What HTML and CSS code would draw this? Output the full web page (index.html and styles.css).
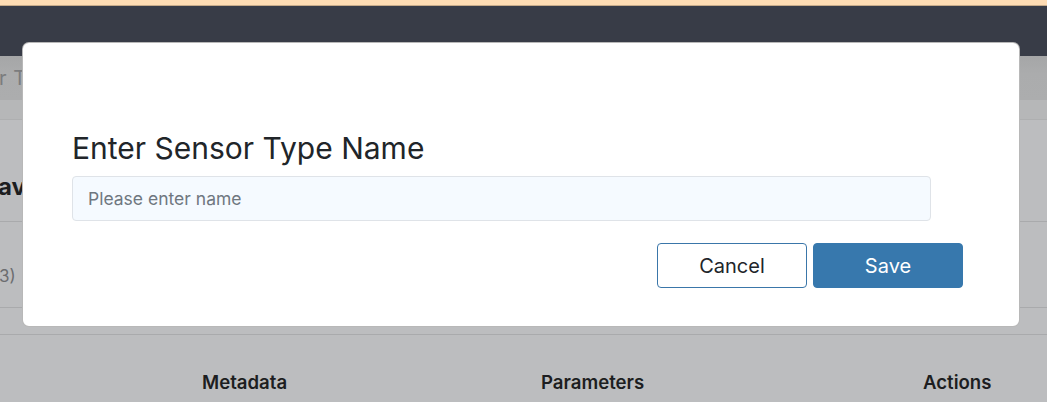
FILE: index.html
```html
<!DOCTYPE html>
<html lang="en">
<head>
<meta charset="utf-8">
<title>Enter Sensor Type Name</title>
<link rel="stylesheet" href="styles.css">
</head>
<body>
<div class="page">
  <div class="topbar"></div>
  <div class="navbar"></div>
  <div class="subbar"><span class="crumb">r Types</span></div>
  <div class="band"></div>
  <div class="row row-title"><span class="page-title">avi</span></div>
  <div class="row row-count"><span class="count">3)</span></div>
  <div class="row row-empty"></div>
  <div class="table-head">
    <span></span>
    <span>Metadata</span>
    <span>Parameters</span>
    <span>Actions</span>
  </div>
</div>

<div class="modal">
  <h2 class="modal-title">Enter Sensor Type Name</h2>
  <input class="modal-input" type="text" placeholder="Please enter name">
  <div class="modal-footer">
    <button class="btn btn-outline">Cancel</button>
    <button class="btn btn-primary">Save</button>
  </div>
</div>
</body>
</html>
```
FILE: styles.css
```css
html, body {
  margin: 0;
  padding: 0;
}
body {
  width: 1047px;
  height: 402px;
  overflow: hidden;
  background: #bcbdbf;
  font-family: Inter, "Noto Sans", sans-serif;
  position: relative;
}
.page {
  display: flex;
  flex-direction: column;
}
.topbar {
  height: 5px;
  background: #fedcb4;
  border-bottom: 1px solid #c7ab8a;
}
.navbar {
  height: 50px;
  background: #383c47;
}
.subbar {
  height: 44px;
  background: linear-gradient(#a5a6a7, #abacad 40%, #acadae);
  display: flex;
  align-items: center;
}
.crumb {
  font-size: 20px;
  color: #7b7c7e;
  margin-left: -1px;
  letter-spacing: 0.5px;
}
.band {
  height: 19px;
  background: #b6b7b8;
  border-bottom: 1px solid #aeafb0;
}
.row {
  display: flex;
  align-items: center;
  border-bottom: 1px solid #a9aaac;
}
.row-title {
  height: 101px;
}
.page-title {
  font-size: 24px;
  font-weight: 700;
  color: #1c1d1f;
  margin-left: -2px;
  margin-top: 32px;
}
.row-count {
  height: 85px;
}
.count {
  font-size: 17px;
  color: #6c6d70;
  margin-left: -1px;
  margin-top: 22px;
}
.row-empty {
  height: 26px;
}
.table-head {
  display: grid;
  grid-template-columns: 202px 339px 382px 1fr;
  height: 66px;
  align-items: end;
  font-size: 18.6px;
  font-weight: 600;
  color: #1d1e21;
}
.table-head span {
  line-height: 22px;
  margin-bottom: 8px;
}

.modal {
  position: absolute;
  left: 22px;
  top: 42px;
  width: 996px;
  height: 283px;
  background: #ffffff;
  border: 1px solid rgba(0, 0, 0, 0.28);
  border-radius: 7px;
  box-sizing: content-box;
  display: flex;
  flex-direction: column;
  padding: 0;
}
.modal-title {
  margin: 87px 0 0 49px;
  font-size: 30px;
  font-weight: 400;
  line-height: 36px;
  color: #212529;
}
.modal-input {
  margin: 10px 0 0 49px;
  width: 859px;
  height: 45px;
  box-sizing: border-box;
  border: 1px solid #dfe3e8;
  border-radius: 4px;
  background: #f5faff;
  padding: 0 15px;
  font-family: Inter, "Noto Sans", sans-serif;
  font-size: 17.5px;
  color: #212529;
  outline: none;
}
.modal-input::placeholder {
  color: #6f777f;
}
.modal-footer {
  display: flex;
  justify-content: flex-end;
  gap: 6px;
  margin-top: 22px;
  padding-right: 56px;
}
.btn {
  width: 150px;
  height: 45px;
  border-radius: 4px;
  font-family: Inter, "Noto Sans", sans-serif;
  font-size: 20px;
  padding-top: 2px;
  box-sizing: border-box;
  cursor: pointer;
}
.btn-outline {
  background: #ffffff;
  border: 1px solid #3a76a9;
  color: #212529;
}
.btn-primary {
  background: #3778ad;
  border: 1px solid #3778ad;
  color: #ffffff;
}
```
